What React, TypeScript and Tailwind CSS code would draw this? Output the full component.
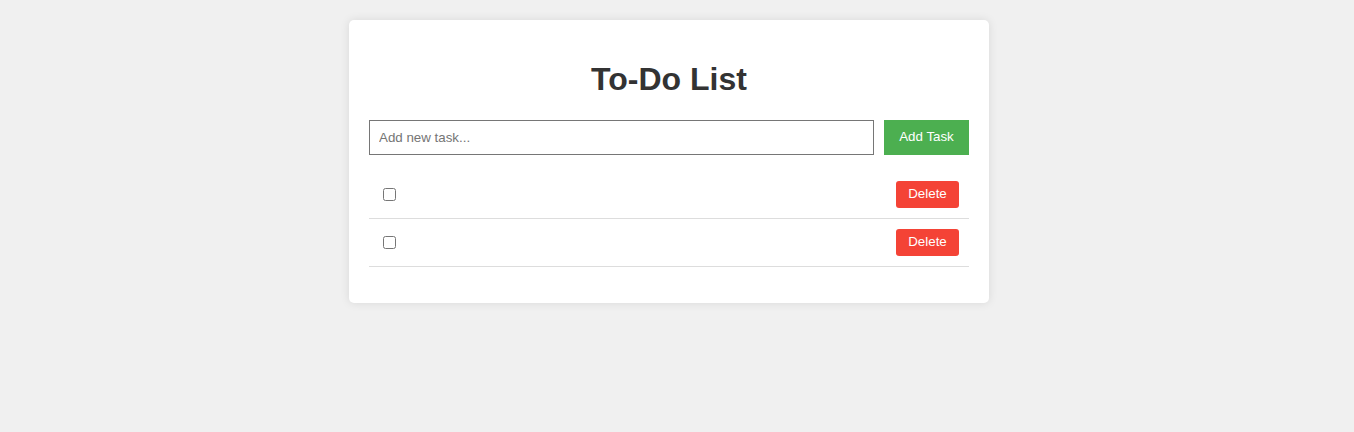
import { useState } from "react"

type Task = { id: number; text: string; done: boolean }

const App = () => {
  const [tasks, setTasks] = useState<Task[]>([
    { id: 1, text: "", done: false },
    { id: 2, text: "", done: false },
  ])
  const [value, setValue] = useState("")

  const addTask = () => {
    if (!value.trim()) return
    setTasks([...tasks, { id: Date.now(), text: value, done: false }])
    setValue("")
  }

  return (
    <div className="min-h-[432px] bg-[#f0f0f0] pt-5 pr-4 font-['Liberation_Sans',Arial,sans-serif]">
      <div className="mx-auto w-[640px] rounded-[5px] bg-white p-5 shadow-[0_0_10px_rgba(0,0,0,0.1)]">
        <h1 className="my-[21.44px] text-center text-[32px] leading-[37px] font-bold text-[#333]">
          To-Do List
        </h1>
        <div className="flex gap-2.5">
          <input
            className="h-[35px] flex-1 border border-[#767676] px-[9px] text-[13.33px] text-[#333] placeholder:text-[#757575] outline-none"
            placeholder="Add new task..."
            value={value}
            onChange={(e) => setValue(e.target.value)}
          />
          <button
            onClick={addTask}
            className="h-[35px] w-[85px] bg-[#4caf50] text-[13.33px] font-medium text-white"
          >
            Add Task
          </button>
        </div>
        <ul className="my-4">
          {tasks.map((task) => (
            <li
              key={task.id}
              className="flex items-center justify-between border-b border-[#ddd] p-2.5"
            >
              <div className="flex items-center gap-2">
                <input
                  type="checkbox"
                  className="ml-1 h-[13px] w-[13px]"
                  checked={task.done}
                  onChange={() =>
                    setTasks(
                      tasks.map((t) =>
                        t.id === task.id ? { ...t, done: !t.done } : t,
                      ),
                    )
                  }
                />
                <span className="text-sm text-[#333]">{task.text}</span>
              </div>
              <button
                onClick={() => setTasks(tasks.filter((t) => t.id !== task.id))}
                className="h-[27px] w-[63px] rounded-[3px] bg-[#f44336] text-[13.33px] text-white"
              >
                Delete
              </button>
            </li>
          ))}
        </ul>
      </div>
    </div>
  )
}

export default App
